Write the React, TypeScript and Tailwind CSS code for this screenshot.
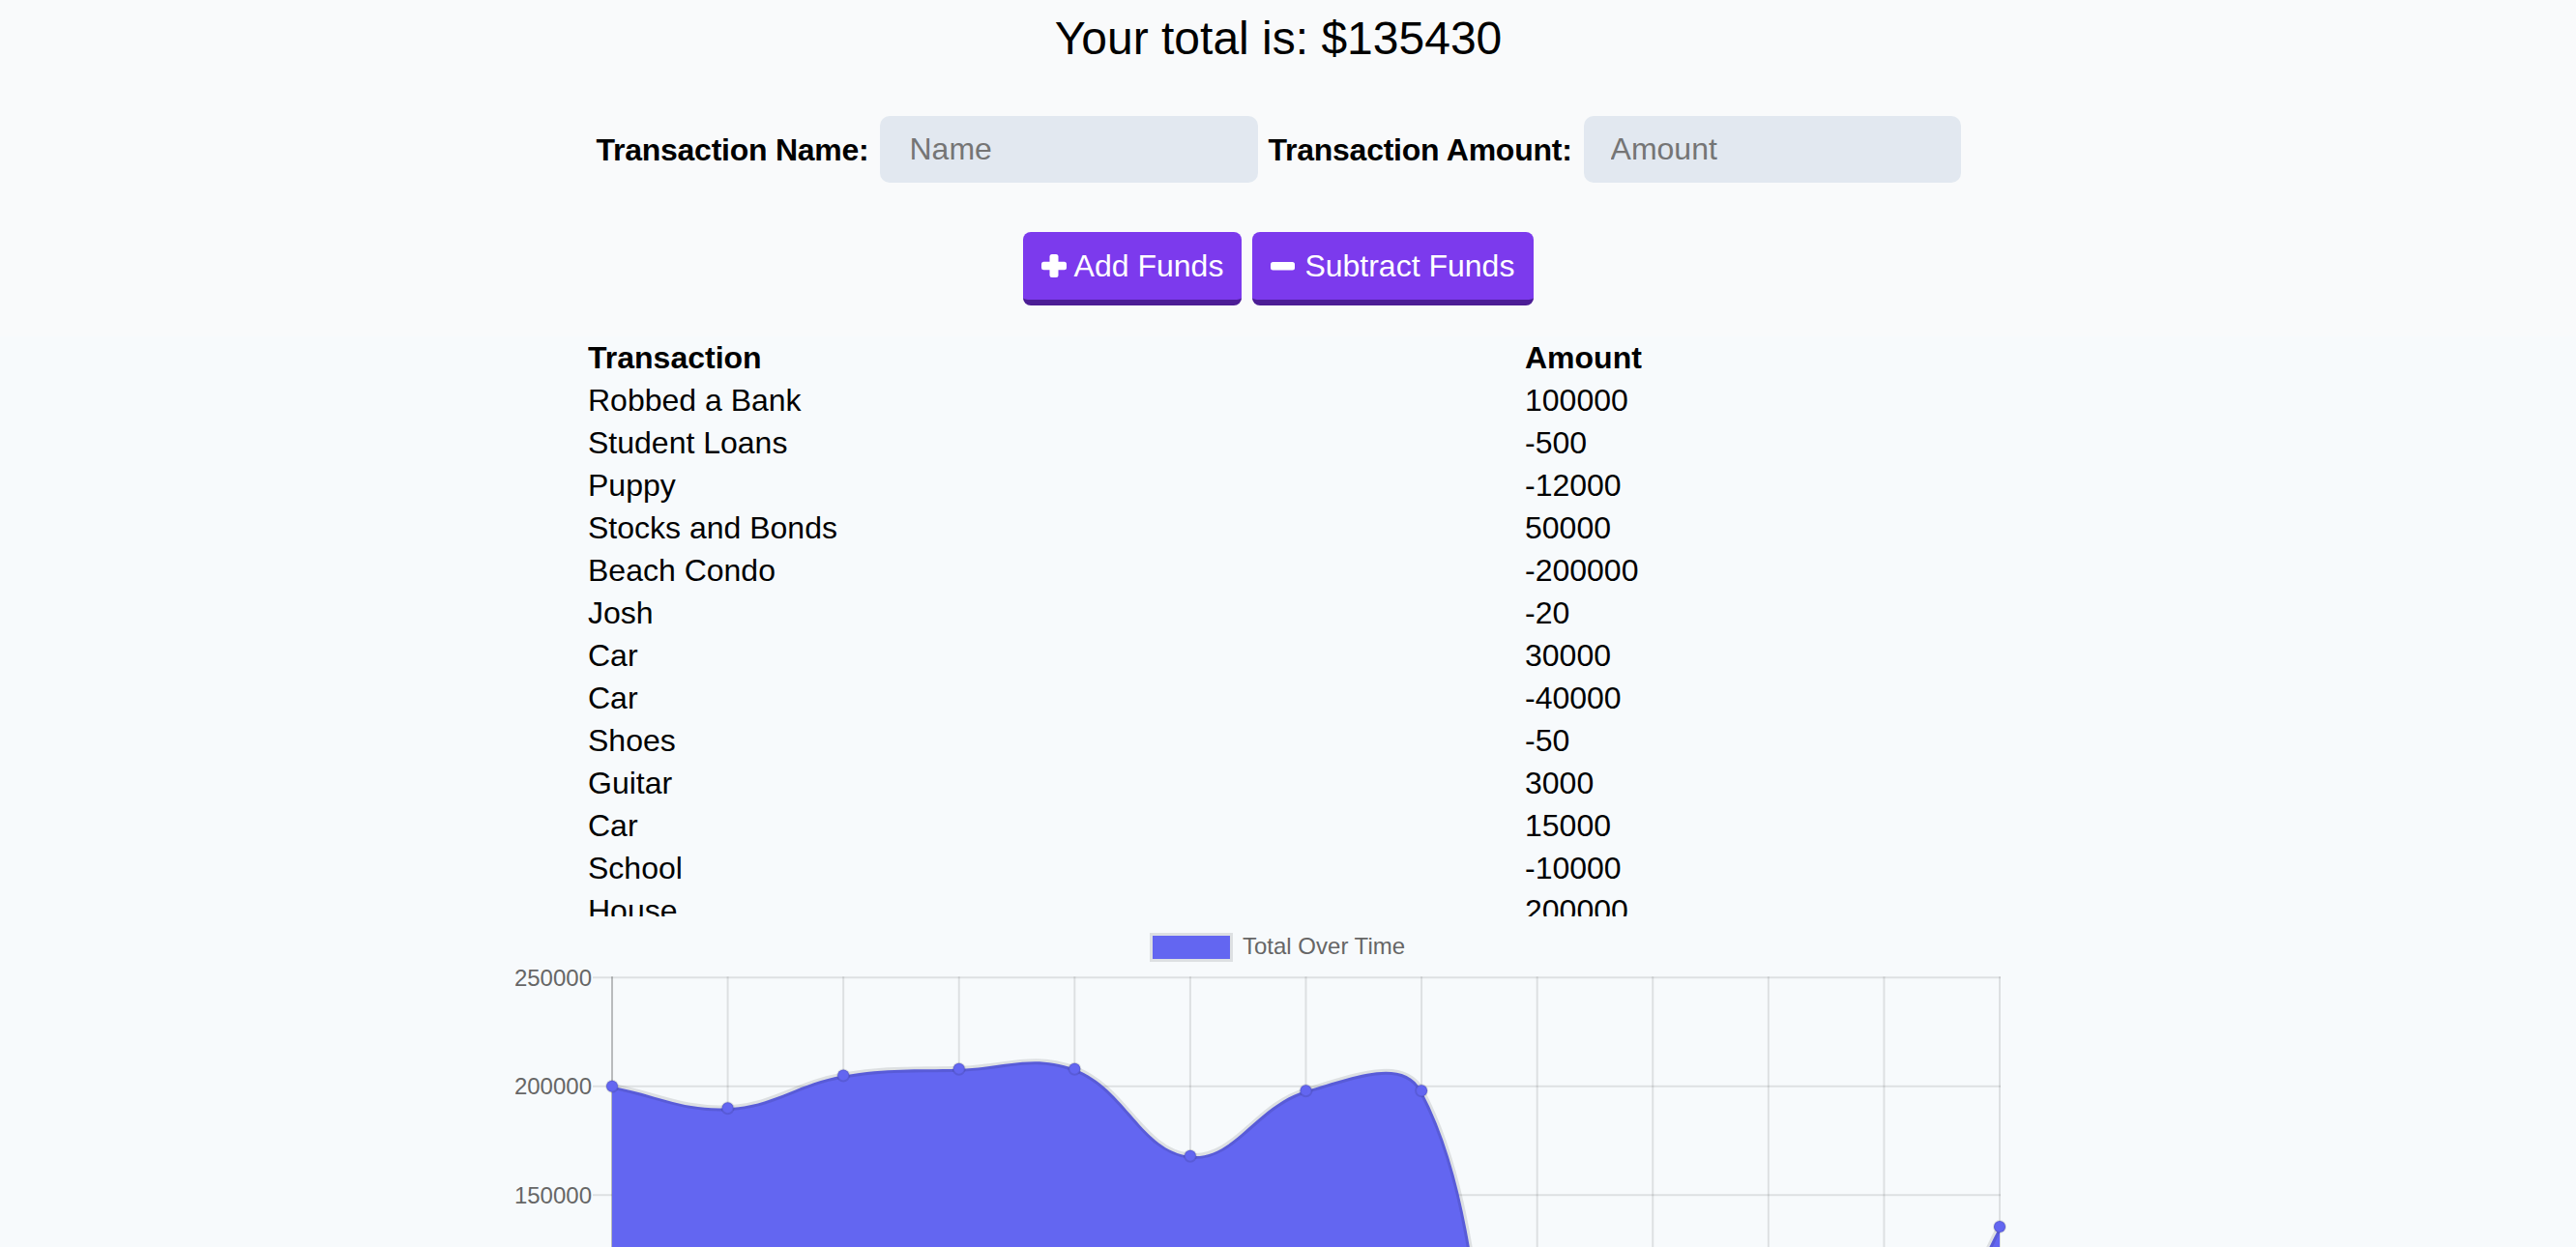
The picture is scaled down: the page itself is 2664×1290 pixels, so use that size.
import React from "react";

const rows: [string, string][] = [
  ["Robbed a Bank", "100000"],
  ["Student Loans", "-500"],
  ["Puppy", "-12000"],
  ["Stocks and Bonds", "50000"],
  ["Beach Condo", "-200000"],
  ["Josh", "-20"],
  ["Car", "30000"],
  ["Car", "-40000"],
  ["Shoes", "-50"],
  ["Guitar", "3000"],
  ["Car", "15000"],
  ["School", "-10000"],
  ["House", "200000"],
];

const values = [200000, 190000, 205000, 208000, 207950, 167950, 197950, 197930, -2070, 47930, 35930, 35430, 135430];

const X0 = 153;
const X1 = 1588;
const DX = (X1 - X0) / 12;
const TOP = 63.2;
const PER = 112.5 / 50000;
const yOf = (v: number) => TOP + (250000 - v) * PER;
const BOTTOM = yOf(-50000);

type P = { x: number; y: number };

function buildPaths() {
  const pts: P[] = values.map((v, i) => ({ x: X0 + i * DX, y: yOf(v) }));
  const t = 0.4;
  const cps = pts.map((cur, i) => {
    const prev = i > 0 ? pts[i - 1] : pts[0];
    const next = i < pts.length - 1 ? pts[i + 1] : pts[pts.length - 1];
    const d01 = Math.hypot(cur.x - prev.x, cur.y - prev.y);
    const d12 = Math.hypot(next.x - cur.x, next.y - cur.y);
    let s01 = d01 / (d01 + d12);
    let s12 = d12 / (d01 + d12);
    if (isNaN(s01)) s01 = 0;
    if (isNaN(s12)) s12 = 0;
    const fa = t * s01;
    const fb = t * s12;
    const cap = (v: number, lo: number, hi: number) => Math.max(Math.min(v, hi), lo);
    return {
      prev: {
        x: cap(cur.x - fa * (next.x - prev.x), X0, X1),
        y: cap(cur.y - fa * (next.y - prev.y), TOP, BOTTOM),
      },
      next: {
        x: cap(cur.x + fb * (next.x - prev.x), X0, X1),
        y: cap(cur.y + fb * (next.y - prev.y), TOP, BOTTOM),
      },
    };
  });
  let d = `M ${pts[0].x} ${pts[0].y}`;
  for (let i = 1; i < pts.length; i++) {
    const a = cps[i - 1].next;
    const b = cps[i].prev;
    d += ` C ${a.x} ${a.y} ${b.x} ${b.y} ${pts[i].x} ${pts[i].y}`;
  }
  const zero = yOf(0);
  const fill = `${d} L ${pts[pts.length - 1].x} ${zero} L ${pts[0].x} ${zero} Z`;
  return { d, fill, pts };
}

function Chart() {
  const { d, fill, pts } = buildPaths();
  const ticks = [250000, 200000, 150000, 100000, 50000, 0, -50000];
  return (
    <svg width={1684} height={900} viewBox="0 0 1684 900" className="block shrink-0">
      {/* legend */}
      <rect x={709} y={17} width={86} height={30} fill="rgba(0,0,0,0.1)" />
      <rect x={712} y={20} width={80} height={24} fill="#6366f1" />
      <text x={805} y={39} fontSize={24} fill="#666" fontFamily="'Liberation Sans', Arial, sans-serif">
        Total Over Time
      </text>
      {/* horizontal grid + labels */}
      {ticks.map((v) => {
        const y = yOf(v);
        return (
          <g key={v}>
            <line x1={133} x2={X1 + 1} y1={y} y2={y} stroke={v === 0 ? "rgba(0,0,0,0.25)" : "rgba(0,0,0,0.1)"} strokeWidth={2} />
            <text x={132} y={y + 8.5} fontSize={24} fill="#666" textAnchor="end" fontFamily="'Liberation Sans', Arial, sans-serif">
              {v}
            </text>
          </g>
        );
      })}
      {/* vertical grid */}
      {values.map((_, i) => {
        const x = X0 + i * DX;
        return (
          <line key={i} x1={x} x2={x} y1={TOP - 1} y2={BOTTOM + 20} stroke={i === 0 ? "rgba(0,0,0,0.25)" : "rgba(0,0,0,0.1)"} strokeWidth={2} />
        );
      })}
      <path d={fill} fill="#6366f1" />
      <path d={d} fill="none" stroke="rgba(0,0,0,0.1)" strokeWidth={6} />
      {pts.map((p, i) => (
        <circle key={i} cx={p.x} cy={p.y} r={6} fill="#6366f1" stroke="rgba(0,0,0,0.1)" strokeWidth={2} />
      ))}
    </svg>
  );
}

function PlusIcon() {
  return (
    <svg width={26} height={24} viewBox="0 0 26 24" className="block shrink-0">
      <rect x={8.5} y={0} width={9} height={24} rx={2.5} fill="#fff" />
      <rect x={0} y={7.75} width={26} height={8.5} rx={2.5} fill="#fff" />
    </svg>
  );
}

function MinusIcon() {
  return (
    <svg width={25} height={9} viewBox="0 0 25 9" className="block shrink-0">
      <rect x={0} y={0} width={25} height={8.5} rx={2.5} fill="#fff" />
    </svg>
  );
}

export default function App() {
  return (
    <div className="h-[1290px] w-full overflow-hidden bg-[#f7fafc] font-['Liberation_Sans',Arial,sans-serif] text-black">
      <div className="h-[348px] w-full bg-[#f9fafb]">
        <div className="flex w-[2644px] flex-col items-center">
          <h1 className="pt-[12px] text-[48px] font-normal leading-[56px]">Your total is: $135430</h1>
          <div className="mt-[52px] flex items-center">
            <label className="text-[32px] font-bold leading-[40px] tracking-[-0.25px]">Transaction Name:</label>
            <input
              placeholder="Name"
              className="ml-[12px] h-[69px] w-[391px] rounded-[10px] bg-[#e2e8f0] px-[30px] text-[32px] outline-none placeholder:text-[#757575]"
            />
            <label className="ml-[10px] text-[32px] font-bold leading-[40px] tracking-[-0.25px]">Transaction Amount:</label>
            <input
              placeholder="Amount"
              className="ml-[12px] h-[69px] w-[390px] rounded-[10px] bg-[#e2e8f0] px-[28px] text-[32px] outline-none placeholder:text-[#757575]"
            />
          </div>
          <div className="mt-[51px] flex gap-[11px]">
            <button className="flex h-[76px] items-center rounded-[8px] border-b-[6px] border-[#4c1d95] bg-[#7c3aed] pl-[19px] pr-[19px] text-[32px] leading-[40px] text-white">
              <PlusIcon />
              <span className="ml-[8px]">Add Funds</span>
            </button>
            <button className="flex h-[76px] items-center rounded-[8px] border-b-[6px] border-[#4c1d95] bg-[#7c3aed] pl-[19px] pr-[20px] text-[32px] leading-[40px] text-white">
              <MinusIcon />
              <span className="ml-[10px]">Subtract Funds</span>
            </button>
          </div>
        </div>
      </div>
      <div className="flex w-[2644px] flex-col items-center">
        <div className="h-[600px] w-[1428px] overflow-hidden text-[32px] leading-[44px]">
          <div className="grid grid-cols-[969px_1fr] font-bold">
            <div>Transaction</div>
            <div>Amount</div>
          </div>
          {rows.map(([n, a], i) => (
            <div key={i} className="grid grid-cols-[969px_1fr]">
              <div>{n}</div>
              <div>{a}</div>
            </div>
          ))}
        </div>
        <Chart />
      </div>
    </div>
  );
}
